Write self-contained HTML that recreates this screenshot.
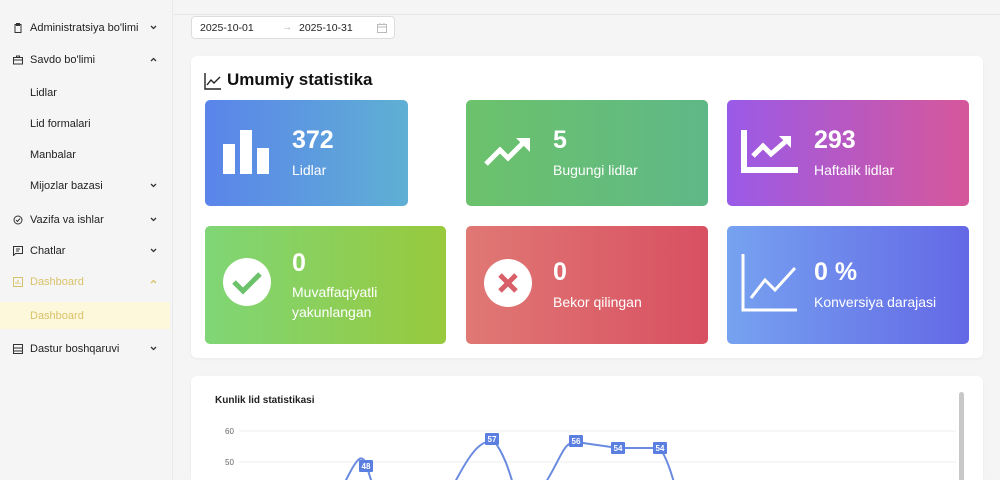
<!DOCTYPE html>
<html><head><meta charset="utf-8"><style>
*{box-sizing:border-box;margin:0;padding:0}
html{width:1000px;height:480px;overflow:hidden}
body{width:1000px;height:480px;overflow:hidden;background:#f5f5f5;font-family:"Liberation Sans",sans-serif;position:relative}
.sb{position:absolute;left:0;top:0;width:173px;height:480px;background:#f5f5f5;border-right:1px solid #e8e8e8}
.it{position:absolute;left:0;width:173px;height:20px;font-size:11px;color:#222;display:flex;align-items:center}
.it .ic{position:absolute;left:13px;width:10px;height:10px}
.it .tx{position:absolute;left:30px}
.it .ch{position:absolute;left:150px;top:7px;width:7px;height:5px}
.hd{position:absolute;left:174px;top:0;width:826px;height:15px;border-bottom:1px solid #e6e6e6;background:#f5f5f5}
.dp{position:absolute;left:191px;top:16px;width:204px;height:23px;background:#fff;border:1px solid #ddd;border-radius:4px;font-size:10.5px;color:#222}
.card{position:absolute;left:191px;width:792px;background:#fff;border-radius:6px;box-shadow:0 1px 3px rgba(0,0,0,.05)}
.st{position:absolute;border-radius:5px;color:#fff}
.st .n{position:absolute;left:87px;font-size:25px;font-weight:bold}
.st .l{position:absolute;left:87px;font-size:14px;line-height:20px}
.st svg{position:absolute}
</style></head><body>
<div class="sb">
<div class="it" style="top:18px"><svg class="ic" viewBox="0 0 10 10" fill="none" stroke="#333" stroke-width="1"><rect x="2" y="1.5" width="6" height="8"/><rect x="3.5" y="0.5" width="3" height="2"/></svg><span class="tx">Administratsiya bo'limi</span><svg class="ch" viewBox="0 0 7 5" fill="none" stroke="#333" stroke-width="1.3"><path d="M1 1l2.5 2.5L6 1"/></svg></div>
<div class="it" style="top:50px"><svg class="ic" viewBox="0 0 10 10" fill="none" stroke="#333" stroke-width="1"><rect x="0.5" y="2.5" width="9" height="6.5"/><path d="M3.5 2.5V1h3v1.5M0.5 5h9"/></svg><span class="tx">Savdo bo'limi</span><svg class="ch" viewBox="0 0 7 5" fill="none" stroke="#333" stroke-width="1.3"><path d="M1 4l2.5-2.5L6 4"/></svg></div>
<div class="it" style="top:83px"><span class="tx">Lidlar</span></div>
<div class="it" style="top:114px"><span class="tx">Lid formalari</span></div>
<div class="it" style="top:145px"><span class="tx">Manbalar</span></div>
<div class="it" style="top:176px"><span class="tx">Mijozlar bazasi</span><svg class="ch" viewBox="0 0 7 5" fill="none" stroke="#333" stroke-width="1.3"><path d="M1 1l2.5 2.5L6 1"/></svg></div>
<div class="it" style="top:210px"><svg class="ic" viewBox="0 0 10 10" fill="none" stroke="#333" stroke-width="1"><circle cx="5" cy="5" r="4"/><path d="M3 5l1.5 1.5L7 3.5"/></svg><span class="tx">Vazifa va ishlar</span><svg class="ch" viewBox="0 0 7 5" fill="none" stroke="#333" stroke-width="1.3"><path d="M1 1l2.5 2.5L6 1"/></svg></div>
<div class="it" style="top:241px"><svg class="ic" viewBox="0 0 10 10" fill="none" stroke="#333" stroke-width="1"><path d="M0.5 0.5h9v7h-7l-2 2z"/><path d="M3 3h4M3 5h3"/></svg><span class="tx">Chatlar</span><svg class="ch" viewBox="0 0 7 5" fill="none" stroke="#333" stroke-width="1.3"><path d="M1 1l2.5 2.5L6 1"/></svg></div>
<div class="it" style="top:272px;color:#d9c26a"><svg class="ic" viewBox="0 0 10 10" fill="none" stroke="#d9c26a" stroke-width="1"><rect x="0.5" y="0.5" width="9" height="9"/><path d="M3 7V5M5 7V3M7 7V6"/></svg><span class="tx">Dashboard</span><svg class="ch" viewBox="0 0 7 5" fill="none" stroke="#d9c26a" stroke-width="1.3"><path d="M1 4l2.5-2.5L6 4"/></svg></div>
<div style="position:absolute;left:0;top:302px;width:170px;height:27px;background:#fdf8dc"></div>
<div class="it" style="top:306px;color:#d9c26a"><span class="tx">Dashboard</span></div>
<div class="it" style="top:339px"><svg class="ic" viewBox="0 0 10 10" fill="none" stroke="#333" stroke-width="1"><rect x="0.5" y="0.5" width="9" height="9"/><path d="M0.5 4h9M0.5 7h9"/></svg><span class="tx">Dastur boshqaruvi</span><svg class="ch" viewBox="0 0 7 5" fill="none" stroke="#333" stroke-width="1.3"><path d="M1 1l2.5 2.5L6 1"/></svg></div>
</div>
<div class="hd"></div>
<div class="dp"><span style="position:absolute;left:8px;top:5px">2025-10-01</span><span style="position:absolute;left:90px;top:4px;color:#bbb">→</span><span style="position:absolute;left:107px;top:5px">2025-10-31</span><svg style="position:absolute;left:185px;top:6px" width="10" height="10" viewBox="0 0 10 10" fill="none" stroke="#bbb"><rect x="0.5" y="1.5" width="9" height="8"/><path d="M0.5 4h9M3 0v2M7 0v2"/></svg></div>
<div class="card" style="top:56px;height:302px">
<svg style="position:absolute;left:13px;top:16px" width="18" height="18" viewBox="0 0 18 18" fill="none" stroke="#222" stroke-width="1.4"><path d="M1 1v16h16"/><path d="M3 13l4-5 3 3 6-6"/></svg>
<div style="position:absolute;left:36px;top:14px;font-size:17px;font-weight:bold;color:#111">Umumiy statistika</div>
</div>
<div class="st" style="left:205px;top:100px;width:203px;height:106px;background:linear-gradient(90deg,#5a84ea,#5fb0d4)"><svg style="left:18px;top:30px" width="48" height="44"><rect x="0" y="14" width="12" height="30" fill="#fff"/><rect x="17" y="0" width="12" height="44" fill="#fff"/><rect x="34" y="18" width="12" height="26" fill="#fff"/></svg><div class="n" style="top:26px">372</div><div class="l" style="top:60px">Lidlar</div></div>
<div class="st" style="left:466px;top:100px;width:242px;height:106px;background:linear-gradient(90deg,#6cc26b,#5fb887)"><svg style="left:18px;top:36px" width="48" height="32" viewBox="0 0 48 32"><path d="M2 28L16 14l8 8L40 6" stroke="#fff" stroke-width="5" fill="none"/><path d="M32 2h14v14z" fill="#fff"/></svg><div class="n" style="top:26px">5</div><div class="l" style="top:60px">Bugungi lidlar</div></div>
<div class="st" style="left:727px;top:100px;width:242px;height:106px;background:linear-gradient(90deg,#9a5ae8,#d6579a)"><svg style="left:14px;top:30px" width="58" height="44" viewBox="0 0 58 44"><path d="M3 0v40h54" stroke="#fff" stroke-width="6" fill="none"/><path d="M12 26l10-10 8 8 14-12" stroke="#fff" stroke-width="5" fill="none"/><path d="M38 6h12v12z" fill="#fff"/></svg><div class="n" style="top:26px">293</div><div class="l" style="top:60px">Haftalik lidlar</div></div>
<div class="st" style="left:205px;top:226px;width:241px;height:118px;background:linear-gradient(90deg,#7fd676,#98c93d)"><svg style="left:18px;top:32px" width="48" height="48"><circle cx="24" cy="24" r="24" fill="#fff"/><path d="M11 24l9 9 17-17" stroke="#6cc26b" stroke-width="5" fill="none"/></svg><div class="n" style="top:23px">0</div><div class="l" style="top:56px">Muvaffaqiyatli<br>yakunlangan</div></div>
<div class="st" style="left:466px;top:226px;width:242px;height:118px;background:linear-gradient(90deg,#e07874,#d85062)"><svg style="left:18px;top:33px" width="48" height="48"><circle cx="24" cy="24" r="24" fill="#fff"/><path d="M16 16l16 16M32 16L16 32" stroke="#d85e68" stroke-width="5"/></svg><div class="n" style="top:32px">0</div><div class="l" style="top:66px">Bekor qilingan</div></div>
<div class="st" style="left:727px;top:226px;width:242px;height:118px;background:linear-gradient(90deg,#76a2f0,#6468e6)"><svg style="left:14px;top:28px" width="58" height="58" viewBox="0 0 58 58"><path d="M2 0v56h54" stroke="#fff" stroke-width="3" fill="none"/><path d="M10 44l14-18 10 10 20-22" stroke="#fff" stroke-width="3" fill="none"/></svg><div class="n" style="top:32px">0 %</div><div class="l" style="top:66px">Konversiya darajasi</div></div>
<div class="card" style="top:376px;height:104px;border-radius:6px 6px 0 0">
<div style="position:absolute;left:24px;top:19px;font-size:10px;font-weight:bold;color:#222">Kunlik lid statistikasi</div>
<div style="position:absolute;left:768px;top:16px;width:5px;height:90px;background:#c8c8c8;border-radius:3px"></div>
</div>
<svg style="position:absolute;left:191px;top:420px" width="770" height="60" font-family="Liberation Sans" font-size="8">
<text x="34" y="14" fill="#666">60</text><text x="34" y="45" fill="#666">50</text>
<path d="M48 11H765M48 42H765" stroke="#eee"/>
<path d="M150 70C165 40 170 30 176 46C182 70 185 70 188 70M260 70C280 30 290 20 303 21C318 40 322 70 325 70M350 70C370 40 372 21 385 22L427 28L469 28C480 45 484 70 486 70" stroke="#6a8be0" stroke-width="2" fill="none"/>
<g fill="#5b7fe0"><rect x="168" y="40" width="14" height="12" rx="1"/><rect x="294" y="13" width="14" height="12" rx="1"/><rect x="378" y="15" width="14" height="12" rx="1"/><rect x="420" y="22" width="14" height="12" rx="1"/><rect x="462" y="22" width="14" height="12" rx="1"/></g>
<g fill="#fff" font-weight="bold" text-anchor="middle"><text x="175" y="49">48</text><text x="301" y="22">57</text><text x="385" y="24">56</text><text x="427" y="31">54</text><text x="469" y="31">54</text></g>
</svg>
</body></html>
